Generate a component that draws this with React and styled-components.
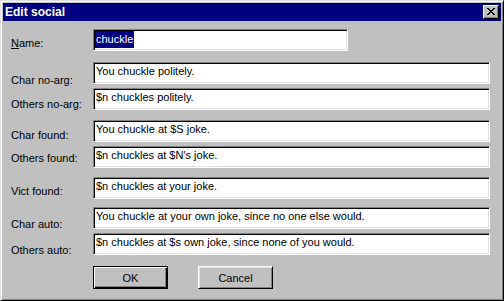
import React from 'react'
import styled, { createGlobalStyle } from 'styled-components'

const GlobalStyle = createGlobalStyle`
  html, body { margin: 0; padding: 0; background: #c0c0c0; }
  body { font-family: "Liberation Sans", Arial, sans-serif; font-size: 11px; }
`;

const Window = styled.div`
  box-sizing: border-box;
  width: 504px;
  height: 301px;
  padding: 2px;
  background: #c0c0c0;
  border: 1px solid;
  border-color: #dfdfdf #000 #000 #dfdfdf;
  box-shadow: inset 1px 1px #fff, inset -1px -1px #808080;
  display: flex;
  flex-direction: column;
`;

const TitleBar = styled.div`
  height: 18px;
  background: #000080;
  display: flex;
  align-items: center;
  justify-content: space-between;
  padding: 0 2px 0 2px;
`;

const Title = styled.span`
  color: #fff;
  font-weight: bold;
  font-size: 12px;
  line-height: 14px;
`;

const CloseButton = styled.div`
  box-sizing: border-box;
  width: 16px;
  height: 14px;
  background: #c0c0c0;
  border: 1px solid;
  border-color: #fff #000 #000 #fff;
  box-shadow: inset -1px -1px #808080;
  display: flex;
  align-items: center;
  justify-content: center;
  padding: 0 1px 1px 0;
`;

const Body = styled.div`
  padding-left: 8px;
  display: flex;
  flex-direction: column;
`;

const Row = styled.div`
  display: grid;
  grid-template-columns: 82px auto;
  align-items: start;
  height: 22px;
  margin-top: ${p => p.$mt}px;
`;

const Label = styled.div`
  padding-top: ${p => p.$off}px;
  line-height: 13px;
  color: #000;
  white-space: nowrap;
  u { text-decoration: underline; }
`;

const Field = styled.div`
  box-sizing: border-box;
  width: ${p => p.$w}px;
  height: 22px;
  background: #fff;
  border: 1px solid;
  border-color: #808080 #fff #fff #808080;
  box-shadow: inset 1px 1px #000, inset -1px -1px #dfdfdf;
  padding: ${p => (p.$sel ? '1px 1px' : '2px 2px')};
  line-height: 13px;
  color: #000;
  white-space: nowrap;
  overflow: hidden;
`;

const Selected = styled.span`
  display: inline-block;
  height: 17px;
  line-height: 17px;
  padding: 0 1px;
  background: #000080;
  color: #fff;
`;

const Buttons = styled.div`
  display: flex;
  gap: 30px;
  padding-left: 82px;
  margin-top: 11px;
`;

const Button = styled.div`
  box-sizing: border-box;
  width: 75px;
  height: 23px;
  background: #c0c0c0;
  display: flex;
  align-items: center;
  justify-content: center;
  color: #000;
  border: 1px solid;
  border-color: ${p => (p.$default ? '#000' : '#fff #000 #000 #fff')};
  box-shadow: ${p =>
    p.$default
      ? 'inset 1px 1px #fff, inset -1px -1px #000, inset -2px -2px #808080'
      : 'inset 1px 1px #dfdfdf, inset -1px -1px #808080'};
`;

const X_ROWS = ['11000011', '01100110', '00111100', '00011000', '00111100', '01100110', '11000011'];
const xPath = X_ROWS.map((r, y) =>
  r.split('').map((c, x) => (c === '1' ? `M${x} ${y}h1v1h-1z` : '')).join('')
).join('');

const CloseIcon = () => (
  <svg width="8" height="7" viewBox="0 0 8 7" shapeRendering="crispEdges">
    <path d={xPath} fill="#000" />
  </svg>
);

const rows = [
  { label: 'Char no-arg:', value: 'You chuckle politely.', mt: 11, off: 12 },
  { label: 'Others no-arg:', value: '$n chuckles politely.', mt: 4, off: 10 },
  { label: 'Char found:', value: 'You chuckle at $S joke.', mt: 10, off: 9 },
  { label: 'Others found:', value: "$n chuckles at $N's joke.", mt: 4, off: 6 },
  { label: 'Vict found:', value: '$n chuckles at your joke.', mt: 9, off: 8 },
  { label: 'Char auto:', value: 'You chuckle at your own joke, since no one else would.', mt: 8, off: 11 },
  { label: 'Others auto:', value: '$n chuckles at $s own joke, since none of you would.', mt: 4, off: 11 },
];

const App = () => {
  return (
    <>
      <GlobalStyle />
      <Window>
        <TitleBar>
          <Title>Edit social</Title>
          <CloseButton><CloseIcon /></CloseButton>
        </TitleBar>
        <Body>
          <Row $mt={8}>
            <Label $off={8}><u>N</u>ame:</Label>
            <Field $w={255} $sel><Selected>chuckle</Selected></Field>
          </Row>
          {rows.map(r => (
            <Row key={r.label} $mt={r.mt}>
              <Label $off={r.off}>{r.label}</Label>
              <Field $w={397}>{r.value}</Field>
            </Row>
          ))}
          <Buttons>
            <Button $default>OK</Button>
            <Button>Cancel</Button>
          </Buttons>
        </Body>
      </Window>
    </>
  )
}

export default App
